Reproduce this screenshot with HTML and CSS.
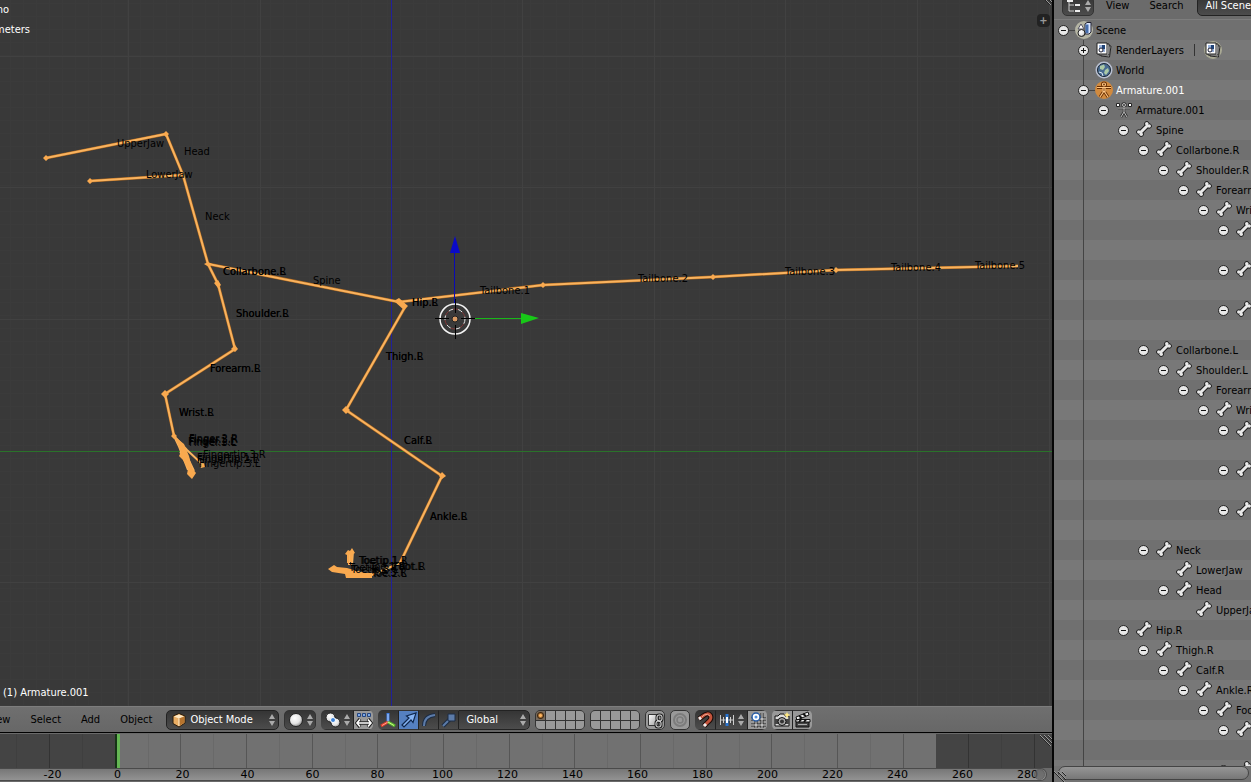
FILE: index.html
```html
<!DOCTYPE html>
<html lang="en">
<head>
    <meta charset="UTF-8">
    <meta name="viewport" content="width=device-width, initial-scale=1.0">
    <title>Armature.001</title>
    <link rel="stylesheet" href="styles.css">
</head>
<body>
    <!-- Shared icons -->
    <svg class="defs" width="0" height="0" aria-hidden="true">
        <defs>
            <linearGradient id="metal" x1="0" y1="0" x2="1" y2="1">
                <stop offset="0" stop-color="#fff"/>
                <stop offset="1" stop-color="#999"/>
            </linearGradient>
            <radialGradient id="ball" cx="0.4" cy="0.35" r="0.7">
                <stop offset="0" stop-color="#fff"/>
                <stop offset="0.6" stop-color="#e4e4e4"/>
                <stop offset="1" stop-color="#888"/>
            </radialGradient>
            <symbol id="bone" viewBox="0 0 18 18">
                <g fill="#1c1c1c" stroke="#1c1c1c">
                    <path d="M5 12 L13 4" stroke-width="5"/>
                    <circle cx="11.8" cy="2.8" r="2.2"/><circle cx="14.2" cy="5" r="2.2"/>
                    <circle cx="3.8" cy="11" r="2.2"/><circle cx="6.2" cy="13.2" r="2.2"/>
                </g>
                <g fill="#e8e8e8">
                    <path d="M5 12 L13 4" stroke="#e8e8e8" stroke-width="3"/>
                    <circle cx="11.8" cy="2.8" r="1.8"/><circle cx="14.2" cy="5" r="1.8"/>
                    <circle cx="3.8" cy="11" r="1.8"/><circle cx="6.2" cy="13.2" r="1.8"/>
                </g>
            </symbol>
            <symbol id="layers" viewBox="0 0 18 18">
                <path d="M5 4 L16 5 L14.5 16 L6 15 Z" fill="#ddd" stroke="#222"/>
                <path d="M4 3 H14 V14 H4 Z" fill="#eee" stroke="#222"/>
                <path d="M2 2 H12 V13 H2 Z" fill="#fff" stroke="#222"/>
                <path d="M4 4 H10 V11 H4 Z" fill="#9bb4dd"/>
                <path d="M7 4 H10 V8 H7 Z" fill="#1f4377"/>
                <circle cx="6" cy="9" r="2" fill="#fff" stroke="#223"/>
            </symbol>
            <symbol id="updown" viewBox="0 0 6 14">
                <path d="M3 1 L6 6 H0 Z M3 13 L6 8 H0 Z" fill="#aaa"/>
            </symbol>
            <symbol id="grip" viewBox="0 0 12 12">
                <path d="M0 1 L11 12 M4 1 L12 9 M8 1 L12 5" stroke="#999" fill="none"/>
                <path d="M0 2 L10 12 M4 2 L12 10 M8 2 L12 6" stroke="#222" fill="none"/>
            </symbol>
        </defs>
    </svg>

    <main class="editor">
        <section class="viewport" aria-label="3D View">
            <svg class="scene" width="100%" height="100%">
                <defs>
                    <pattern id="minor" x="10" y="3" width="13" height="13" patternUnits="userSpaceOnUse">
                        <path d="M0 0.5 H13 M0.5 0 V13" stroke="#3b3b3b"/>
                    </pattern>
                </defs>
                <rect width="100%" height="100%" fill="url(#minor)"/>
                <g stroke="#414141" shape-rendering="crispEdges">
                    <path d="M128.5 0 V2000 M260.5 0 V2000 M522.5 0 V2000 M654.5 0 V2000 M785.5 0 V2000 M917.5 0 V2000 M1049.5 0 V2000"/>
                    <path d="M0 56.5 H4000 M0 187.5 H4000 M0 319.5 H4000 M0 582.5 H4000"/>
                </g>
                <rect y="451" width="100%" height="1" fill="#2a722a"/>
                <rect x="391" width="1" height="100%" fill="#20209a"/>

                <!-- Bones -->
                <g class="bones-edge">
                    <path d="M46 158 L166 134 L183 175 L208 264 L399 302 L543 285 L712 277 L836 270 L1018 266"/>
                    <path d="M90 181 L183 175"/>
                    <path d="M208 264 L218 284 L235 349 L165 394 L174 436"/>
                    <path d="M399 302 L405 307 L346 410 L442 476 L400 563"/>
                </g>
                <g class="bones">
                    <path d="M46 158 L166 134 L183 175 L208 264 L399 302 L543 285 L712 277 L836 270 L1018 266"/>
                    <path d="M90 181 L183 175"/>
                    <path d="M208 264 L218 284 L235 349 L165 394 L174 436"/>
                    <path d="M399 302 L405 307 L346 410 L442 476 L400 563"/>
                    <path d="M174 436 L184 457 L192 475 M174 436 L187 450 L203 465 M178 444 L188 470 M182 446 L194 471 M180 452 L189 462"/>
                    <path d="M400 563 L372 575 L331 569 M346 575 L372 575 M334 570 L360 572 M349 565 L349 552 M352 565 L353 551"/>
                </g>
                <g class="joints">
                    <path d="M43 158 l3 -3 3 3 -3 3z M87 181 l3 -3 3 3 -3 3z M163 134 l3 -3 3 3 -3 3z M204 264 l4 -2 4 2 -3 3z M214 283 l4 -3 3 5 -3 3z M231 349 l4 -4 3 4 -3 3z M161 394 l4 -4 4 4 -4 4z M171 436 l3 -3 3 3 -3 3z"/>
                    <path d="M342 410 l4 -4 4 4 -4 4z M439 476 l3 -4 4 4 -4 3z M394 301 l5 -3 9 8 -4 4z M540 285 l3 -3 3 3 -3 3z M710 277 l3 -3 3 3 -3 3z M833 270 l3 -3 3 3 -3 3z"/>
                    <path d="M174 436 L184 444 L189 456 L192 468 L196 473 L192 479 L187 474 L188 469 L183 460 L179 456 L181 452 Z"/>
                    <path d="M328 569 L334 565 L337 567 L347 568 L364 573 L372 573 L372 578 L346 578 L345 574 L332 572 Z"/>
                    <path d="M345 554 l3 -4 2 1 2 -3 3 5 -2 1 -1 8 h-2 v-8 l-1 1 v8 h-2 v-8z"/>
                    <path d="M200 465 l4 -2 1 4 -4 1z"/>
                </g>

                <!-- Bone names, left and right sides lie over each other -->
                <g class="bone-names">
                    <text x="117" y="147">UpperJaw</text>
                    <text x="184" y="155">Head</text>
                    <text x="146" y="178">LowerJaw</text>
                    <text x="205" y="220">Neck</text>
                    <text x="313" y="284">Spine</text>
                    <text x="223" y="275">Collarbone.R</text><text x="223" y="275">Collarbone.L</text>
                    <text x="236" y="317">Shoulder.R</text><text x="236" y="317">Shoulder.L</text>
                    <text x="210" y="372">Forearm.R</text><text x="210" y="372">Forearm.L</text>
                    <text x="179" y="416">Wrist.R</text><text x="179" y="416">Wrist.L</text>
                    <text x="189" y="442">Finger.2.R</text><text x="189" y="443">Finger.3.R</text><text x="188" y="445">Finger.1.L</text><text x="189" y="446">Finger.3.L</text>
                    <text x="203" y="458">Fingertip.3.R</text><text x="197" y="461">Fingertip.1.R</text><text x="197" y="463">Fingertip.2.L</text><text x="199" y="467">Fingertip.3.L</text>
                    <text x="412" y="306">Hip.R</text><text x="412" y="306">Hip.L</text>
                    <text x="386" y="360">Thigh.R</text><text x="386" y="360">Thigh.L</text>
                    <text x="404" y="444">Calf.R</text><text x="404" y="444">Calf.L</text>
                    <text x="430" y="520">Ankle.R</text><text x="430" y="520">Ankle.L</text>
                    <text x="359" y="564">Toetip.1.R</text><text x="360" y="564">Toetip.1.L</text>
                    <text x="394" y="570">Foot.R</text><text x="393" y="570">Foot.L</text>
                    <text x="349" y="571">Toetip.2.R</text><text x="351" y="573">Toetip.3.L</text>
                    <text x="370" y="570">Toe.1.R</text><text x="371" y="576">Toe.3.R</text><text x="372" y="577">Toe.2.L</text>
                    <text x="480" y="294">Tailbone.1</text>
                    <text x="638" y="282">Tailbone.2</text>
                    <text x="785" y="275">Tailbone.3</text>
                    <text x="891" y="271">Tailbone.4</text>
                    <text x="975" y="269">Tailbone.5</text>
                </g>

                <!-- 3D cursor and manipulator -->
                <path d="M454.5 304 V252" stroke="#0a0ab4"/>
                <path d="M455 236 L460 253 H450 Z" fill="#0a0ac8"/>
                <path d="M475 318.5 H521" stroke="#18b818"/>
                <path d="M539 318 L521 313 V324 Z" fill="#18c818"/>
                <circle cx="455" cy="319" r="10" fill="none" stroke="#e6e6e6" stroke-dasharray="5 5"/>
                <circle cx="455" cy="319" r="10" fill="none" stroke="#803838" stroke-dasharray="5 5" stroke-dashoffset="5"/>
                <circle cx="455" cy="319" r="15" fill="none" stroke="#f4f4f4" stroke-width="1.5"/>
                <path d="M435 318.5 H449 M461 318.5 H475 M455.5 299 V313 M455.5 325 V339" stroke="#000"/>
                <circle cx="455" cy="319" r="3" fill="#d99a63" stroke="#222"/>

                <g class="view-info">
                    <text x="9" y="13" text-anchor="end">User Ortho</text>
                    <text x="30" y="33" text-anchor="end">Centimeters</text>
                    <text x="3" y="696">(1) Armature.001</text>
                </g>
            </svg>
            <button class="open-panel" type="button" aria-label="Show properties">+</button>
            <svg class="grip-view" width="12" height="12"><use href="#grip"/></svg>
        </section>

        <header class="toolbar">
            <button class="menu" type="button">View</button>
            <button class="menu" type="button">Select</button>
            <button class="menu" type="button">Add</button>
            <button class="menu" type="button">Object</button>

            <span class="dropdown mode">
                <svg class="lead" width="16" height="16" viewBox="0 0 16 16"><path d="M2 4 L8 1.5 L14 4 V11 L8 15 L2 11.5 Z" fill="#e9ad63" stroke="#2a1c0c"/><path d="M3 4.4 L8 2.4 L13 4.4 L8 6.4 Z" fill="#ffe9c4"/><path d="M8 6.4 L13.4 4.4 V10.6 L8 14.2 Z" fill="#b6742e"/><path d="M8 6.4 V14" stroke="#fff0d4"/></svg>
                <select aria-label="Mode"><option>Object Mode</option></select>
                <svg class="arrows" width="6" height="14"><use href="#updown"/></svg>
            </span>

            <button class="tool dark wide" type="button" aria-label="Viewport shading">
                <svg width="16" height="16" viewBox="0 0 16 16"><circle cx="8" cy="8" r="6.5" fill="url(#ball)" stroke="#222"/></svg>
                <svg width="6" height="14"><use href="#updown"/></svg>
            </button>

            <div class="group">
                <button class="tool dark wide" type="button" aria-label="Pivot point">
                    <svg width="16" height="16" viewBox="0 0 16 16"><circle cx="5.5" cy="5.5" r="4.5" fill="url(#ball)" stroke="#222"/><circle cx="10.5" cy="10.5" r="4.5" fill="url(#ball)" stroke="#222"/><circle cx="8" cy="8" r="2.5" fill="#3b82d8" stroke="#fff"/></svg>
                    <svg width="6" height="14"><use href="#updown"/></svg>
                </button>
                <button class="tool lit" type="button" aria-label="Manipulate center points">
                    <svg width="18" height="18" viewBox="0 0 18 18"><path d="M2.5 2.5h3v3h-3z M7.5 2.5h3v3h-3z M12.5 2.5h3v3h-3z" fill="#7eaae8" stroke="#25457e"/><path d="M5 8 L2 12 L5 16 M13 8 L16 12 L13 16 M2 12 H16" stroke="#222" stroke-width="3.4" fill="none"/><path d="M5 8.5 L2 12 L5 15.5 M13 8.5 L16 12 L13 15.5 M2 12 H16" stroke="#fff" stroke-width="1.6" fill="none"/></svg>
                </button>
            </div>

            <div class="group">
                <button class="tool dark" type="button" aria-label="Show manipulator">
                    <svg width="18" height="18" viewBox="0 0 18 18"><path d="M9 11 V2" stroke="#3d7be0" stroke-width="3"/><path d="M9 3 V10" stroke="#b9d3ff"/><path d="M9 11 L2 15" stroke="#de3c2c" stroke-width="3"/><path d="M9 11 L3 14.5" stroke="#ffa48c"/><path d="M9 11 L16 15" stroke="#58bc2c" stroke-width="3"/><path d="M9 11 L15 14.5" stroke="#d6f28c"/></svg>
                </button>
                <button class="tool active" type="button" aria-label="Translate">
                    <svg width="18" height="18" viewBox="0 0 18 18"><path d="M2 14 L9 7 L6.5 5 L16 2 L13 11.5 L11 9 L4 16 Z" fill="#86b4f4" stroke="#10284e" stroke-width="1.2"/></svg>
                </button>
                <button class="tool dark" type="button" aria-label="Rotate">
                    <svg width="18" height="18" viewBox="0 0 18 18"><path d="M4 15 Q4 5 15 4" stroke="#1c2c44" stroke-width="4" fill="none"/><path d="M4 15 Q4 5 15 4" stroke="#5c7ba8" stroke-width="2" fill="none"/></svg>
                </button>
                <button class="tool dark" type="button" aria-label="Scale">
                    <svg width="18" height="18" viewBox="0 0 18 18"><path d="M3 15 L10 8" stroke="#1c2c44" stroke-width="4"/><path d="M3 15 L10 8" stroke="#5c7ba8" stroke-width="2"/><path d="M8 3 H15 V10 H8 Z" fill="#5c7ba8" stroke="#1c2c44"/></svg>
                </button>
                <span class="dropdown orient">
                    <select aria-label="Transform orientation"><option>Global</option></select>
                    <svg class="arrows" width="6" height="14"><use href="#updown"/></svg>
                </span>
            </div>

            <button class="tool scene-layers" type="button" aria-label="Layers 1 to 10">
                <i class="used"></i><i></i><i></i><i></i><i></i><i></i><i></i><i></i><i></i><i></i>
            </button>
            <button class="tool scene-layers" type="button" aria-label="Layers 11 to 20">
                <i></i><i></i><i></i><i></i><i></i><i></i><i></i><i></i><i></i><i></i>
            </button>

            <button class="tool lit" type="button" aria-label="Lock to scene">
                <svg width="18" height="18" viewBox="0 0 18 18"><path d="M2.5 3.5 H12.5 V14.5 H2.5 Z" fill="url(#metal)" stroke="#333"/><rect x="11" y="4" width="5" height="6" rx="2" fill="none" stroke="#222" stroke-width="3"/><rect x="10" y="10" width="5" height="6" rx="2" fill="none" stroke="#222" stroke-width="3"/><rect x="11" y="4" width="5" height="6" rx="2" fill="none" stroke="#eee"/><rect x="10" y="10" width="5" height="6" rx="2" fill="none" stroke="#eee"/></svg>
            </button>
            <button class="tool lit" type="button" aria-label="Proportional editing">
                <svg width="18" height="18" viewBox="0 0 18 18" fill="none"><circle cx="9" cy="9" r="6" stroke="#7c7c7c" stroke-width="2"/><circle cx="9" cy="9" r="3" stroke="#7c7c7c" stroke-width="1.5"/></svg>
            </button>

            <div class="group">
                <button class="tool dark" type="button" aria-label="Snap">
                    <svg width="18" height="18" viewBox="0 0 18 18" fill="none"><path d="M3 8 L7 5 Q12 1 14.5 4.5 Q16 8 12 11 L8 15" stroke="#1c0c08" stroke-width="5"/><path d="M3 8 L7 5 Q12 1 14.5 4.5 Q16 8 12 11 L8 15" stroke="#c4543c" stroke-width="3"/><path d="M6 6 L8 4 Q12 2 14 5" stroke="#f0a28c"/><path d="M3 8 L5 6.5 M8 15 L10 13" stroke="#eee" stroke-width="3"/></svg>
                </button>
                <button class="tool dark wide" type="button" aria-label="Snap element">
                    <svg width="16" height="16" viewBox="0 0 16 16"><path d="M1 8 H15 M1.5 3 V13 M4.5 5 V11 M11.5 5 V11 M14.5 3 V13" stroke="#ccc"/><path d="M8 2 V14" stroke="#2874d0" stroke-width="3"/><path d="M8 5 V11" stroke="#fff" stroke-width="2"/></svg>
                    <svg width="6" height="14"><use href="#updown"/></svg>
                </button>
                <button class="tool lit" type="button" aria-label="Snap to grid">
                    <svg width="18" height="18" viewBox="0 0 18 18"><path d="M7 2 V17 M13 2 V17 M2 8 H17 M2 14 H17" stroke="#222" stroke-width="3"/><path d="M7 2 V17 M13 2 V17 M2 8 H17 M2 14 H17" stroke="#eee"/><circle cx="7" cy="6" r="4" fill="#fff" stroke="#285ca4" stroke-width="1.5"/><circle cx="7" cy="6" r="1.5" fill="#5090e0"/></svg>
                </button>
            </div>

            <div class="group">
                <button class="tool lit" type="button" aria-label="Render image">
                    <svg width="18" height="18" viewBox="0 0 18 18"><path d="M2 5 H5 L7 3 H11 L12 5 H16 V15 H2 Z" fill="#ddd" stroke="#111"/><path d="M2 8 H16 V13 H2 Z" fill="#444"/><circle cx="9" cy="10.5" r="4" fill="#aaa" stroke="#111"/><circle cx="9" cy="10.5" r="2" fill="#333"/><path d="M14 1 L15 3 L17.5 4 L15 5 L14 8 L13 5 L10.5 4 L13 3 Z" fill="#ffe984"/></svg>
                </button>
                <button class="tool lit" type="button" aria-label="Render animation">
                    <svg width="18" height="18" viewBox="0 0 18 18"><path d="M2 9 H15 V16 H2 Z" fill="#444" stroke="#111"/><path d="M2 6 L14 1 L15 4 L3 9 Z M2 8.5 H16 V11 H2 Z" fill="#eee" stroke="#111"/><path d="M5 5 L8 7 M9 3 L12 5 M5 11 L7 8.5 M10 11 L12 8.5" stroke="#111" stroke-width="2"/><path d="M4 13.5 H13" stroke="#aaa"/></svg>
                </button>
            </div>
        </header>

        <section class="timeline" aria-label="Timeline">
            <svg class="frames" width="100%" height="34">
                <rect x="117" width="819" height="34" fill="#717171"/>
                <g stroke="#000" stroke-opacity="0.07" shape-rendering="crispEdges">
                    <path d="M16.5 0 V34 M82.5 0 V34 M148.5 0 V34 M213.5 0 V34 M279.5 0 V34 M345.5 0 V34 M410.5 0 V34 M476.5 0 V34 M542.5 0 V34 M607.5 0 V34 M673.5 0 V34 M739.5 0 V34 M804.5 0 V34 M870.5 0 V34 M1001.5 0 V34"/>
                </g>
                <g stroke="#000" stroke-opacity="0.24" shape-rendering="crispEdges">
                    <path d="M49.5 0 V34 M180.5 0 V34 M246.5 0 V34 M312.5 0 V34 M377.5 0 V34 M443.5 0 V34 M509.5 0 V34 M574.5 0 V34 M640.5 0 V34 M706.5 0 V34 M771.5 0 V34 M837.5 0 V34 M903.5 0 V34 M968.5 0 V34 M1034.5 0 V34"/>
                </g>
                <rect x="115" width="2" height="34" fill="#163416"/>
                <rect x="117" width="3" height="34" fill="#65b854"/>
            </svg>
            <svg class="grip-top" width="12" height="12"><use href="#grip"/></svg>
            <div class="ruler">
                <span>-20</span><span>0</span><span>20</span><span>40</span><span>60</span><span>80</span><span>100</span><span>120</span><span>140</span><span>160</span><span>180</span><span>200</span><span>220</span><span>240</span><span>260</span><span>280</span>
                <b class="knob"></b>
            </div>
        </section>
    </main>

    <aside class="outliner">
        <header class="outliner-bar">
            <button class="tool dark editor-type" type="button" aria-label="Editor type">
                <svg width="16" height="16" viewBox="0 0 16 16"><path d="M3 2 V13 H8 M3 7 H8" fill="none" stroke="#ccc"/><path d="M1 3 H7 M9 7 H14 M9 13 H14" stroke="#eee" stroke-width="2"/></svg>
                <svg width="6" height="14"><use href="#updown"/></svg>
            </button>
            <button class="menu" type="button">View</button>
            <button class="menu" type="button">Search</button>
            <span class="dropdown display">
                <select aria-label="Display mode"><option>All Scenes</option></select>
            </span>
        </header>

        <ul class="tree">
            <li>
                <div class="row linked"><button class="toggle" type="button" aria-label="Collapse Scene"></button>
                    <svg width="18" height="18" viewBox="0 0 18 18"><circle cx="9" cy="9" r="9" fill="#b5b5a4"/><path d="M10 3 L12 1.5 H16 V11 L14 13 H10 Z" fill="#dce8ff" stroke="#223"/><path d="M10.5 3.5 H13.5 V12 H10.5 Z" fill="#466eac"/><path d="M3 8 L6 3 L9 8 Z" fill="#fff" stroke="#556"/><circle cx="6.5" cy="12" r="3.5" fill="url(#ball)" stroke="#222"/></svg>
                    <span>Scene</span></div>
                <ul class="trunk">
                    <li><div class="row"><button class="toggle closed" type="button" aria-label="Expand RenderLayers"></button><svg width="18" height="18"><use href="#layers"/></svg><span>RenderLayers</span><i class="bar"></i><svg class="extra" width="18" height="18" viewBox="0 0 18 18"><circle cx="9" cy="9" r="9" fill="#a9a994"/><use href="#layers"/></svg></div></li>
                    <li><div class="row leaf">
                        <svg width="18" height="18" viewBox="0 0 18 18"><circle cx="9" cy="9" r="8.5" fill="#b8bfd0"/><circle cx="9" cy="9" r="6.5" fill="#486b91" stroke="#172431"/><path d="M5 5 L9 3.5 L10 6 L8 9 L5 8 Z M10 9 L13 7 L14 10 L11 14 L9 12 Z" fill="#abc9a6"/><path d="M4 11 L7 12 L8 15" stroke="#dce8ee" fill="none"/></svg>
                        <span>World</span></div></li>
                    <li>
                        <div class="row linked selected"><button class="toggle" type="button" aria-label="Collapse Armature.001"></button>
                            <svg width="18" height="18" viewBox="0 0 18 18"><circle cx="9" cy="9" r="9" fill="#d18a3e"/><g fill="none" stroke="#6a3004" stroke-width="3"><circle cx="9" cy="3.5" r="1.5"/><path d="M2 6.5 H16 M9 6 V11 M9 10 L5 16 M9 10 L13 16"/></g><g fill="none" stroke="#ffc683" stroke-width="1.2"><circle cx="9" cy="3.5" r="1.5"/><path d="M2 6.5 H16 M8 6 V11 M10 6 V11 M9 10 L5 16 M9 10 L13 16"/></g></svg>
                            <span>Armature.001</span></div>
                        <ul>
                            <li>
                                <div class="row"><button class="toggle" type="button" aria-label="Collapse armature data"></button>
                                    <svg width="18" height="18" viewBox="0 0 18 18"><g fill="none" stroke="#333" stroke-width="2.5"><circle cx="9" cy="4" r="1.5"/><path d="M3 7 H15 M9 7 V11 M9 11 L6 16 M9 11 L12 16"/></g><g fill="none" stroke="#bbb"><circle cx="9" cy="4" r="1.5"/><path d="M3 7 H15 M9 7 V11 M9 11 L6 16 M9 11 L12 16"/></g><path d="M1.5 2.5h3v3h-3z M13.5 2.5h3v3h-3z" fill="#fff" stroke="#222"/></svg>
                                    <span>Armature.001</span></div>
                                <ul>
                                    <li>
                                        <div class="row"><button class="toggle" type="button" aria-label="Collapse Spine"></button><svg width="18" height="18"><use href="#bone"/></svg><span>Spine</span></div>
                                        <ul>
                                            <li>
                                                <div class="row"><button class="toggle" type="button" aria-label="Collapse Collarbone.R"></button><svg width="18" height="18"><use href="#bone"/></svg><span>Collarbone.R</span></div>
                                                <ul><li>
                                                    <div class="row"><button class="toggle" type="button" aria-label="Collapse Shoulder.R"></button><svg width="18" height="18"><use href="#bone"/></svg><span>Shoulder.R</span></div>
                                                    <ul><li>
                                                        <div class="row"><button class="toggle" type="button" aria-label="Collapse Forearm.R"></button><svg width="18" height="18"><use href="#bone"/></svg><span>Forearm.R</span></div>
                                                        <ul><li>
                                                            <div class="row"><button class="toggle" type="button" aria-label="Collapse Wrist.R"></button><svg width="18" height="18"><use href="#bone"/></svg><span>Wrist.R</span></div>
                                                            <ul>
                                                                <li class="finger"><div class="row"><button class="toggle" type="button" aria-label="Collapse Finger.1.R"></button><svg width="18" height="18"><use href="#bone"/></svg></div></li>
                                                                <li class="finger"><div class="row"><button class="toggle" type="button" aria-label="Collapse Finger.2.R"></button><svg width="18" height="18"><use href="#bone"/></svg></div></li>
                                                                <li class="finger"><div class="row"><button class="toggle" type="button" aria-label="Collapse Finger.3.R"></button><svg width="18" height="18"><use href="#bone"/></svg></div></li>
                                                            </ul>
                                                        </li></ul>
                                                    </li></ul>
                                                </li></ul>
                                            </li>
                                            <li>
                                                <div class="row"><button class="toggle" type="button" aria-label="Collapse Collarbone.L"></button><svg width="18" height="18"><use href="#bone"/></svg><span>Collarbone.L</span></div>
                                                <ul><li>
                                                    <div class="row"><button class="toggle" type="button" aria-label="Collapse Shoulder.L"></button><svg width="18" height="18"><use href="#bone"/></svg><span>Shoulder.L</span></div>
                                                    <ul><li>
                                                        <div class="row"><button class="toggle" type="button" aria-label="Collapse Forearm.L"></button><svg width="18" height="18"><use href="#bone"/></svg><span>Forearm.L</span></div>
                                                        <ul><li>
                                                            <div class="row"><button class="toggle" type="button" aria-label="Collapse Wrist.L"></button><svg width="18" height="18"><use href="#bone"/></svg><span>Wrist.L</span></div>
                                                            <ul>
                                                                <li class="finger"><div class="row"><button class="toggle" type="button" aria-label="Collapse Finger.1.L"></button><svg width="18" height="18"><use href="#bone"/></svg></div></li>
                                                                <li class="finger"><div class="row"><button class="toggle" type="button" aria-label="Collapse Finger.2.L"></button><svg width="18" height="18"><use href="#bone"/></svg></div></li>
                                                                <li class="finger"><div class="row"><button class="toggle" type="button" aria-label="Collapse Finger.3.L"></button><svg width="18" height="18"><use href="#bone"/></svg></div></li>
                                                            </ul>
                                                        </li></ul>
                                                    </li></ul>
                                                </li></ul>
                                            </li>
                                            <li>
                                                <div class="row"><button class="toggle" type="button" aria-label="Collapse Neck"></button><svg width="18" height="18"><use href="#bone"/></svg><span>Neck</span></div>
                                                <ul>
                                                    <li><div class="row leaf"><svg width="18" height="18"><use href="#bone"/></svg><span>LowerJaw</span></div></li>
                                                    <li>
                                                        <div class="row"><button class="toggle" type="button" aria-label="Collapse Head"></button><svg width="18" height="18"><use href="#bone"/></svg><span>Head</span></div>
                                                        <ul><li><div class="row leaf"><svg width="18" height="18"><use href="#bone"/></svg><span>UpperJaw</span></div></li></ul>
                                                    </li>
                                                </ul>
                                            </li>
                                        </ul>
                                    </li>
                                    <li>
                                        <div class="row"><button class="toggle" type="button" aria-label="Collapse Hip.R"></button><svg width="18" height="18"><use href="#bone"/></svg><span>Hip.R</span></div>
                                        <ul><li>
                                            <div class="row"><button class="toggle" type="button" aria-label="Collapse Thigh.R"></button><svg width="18" height="18"><use href="#bone"/></svg><span>Thigh.R</span></div>
                                            <ul><li>
                                                <div class="row"><button class="toggle" type="button" aria-label="Collapse Calf.R"></button><svg width="18" height="18"><use href="#bone"/></svg><span>Calf.R</span></div>
                                                <ul><li>
                                                    <div class="row"><button class="toggle" type="button" aria-label="Collapse Ankle.R"></button><svg width="18" height="18"><use href="#bone"/></svg><span>Ankle.R</span></div>
                                                    <ul><li>
                                                        <div class="row"><button class="toggle" type="button" aria-label="Collapse Foot.R"></button><svg width="18" height="18"><use href="#bone"/></svg><span>Foot.R</span></div>
                                                        <ul>
                                                            <li class="finger"><div class="row"><button class="toggle" type="button" aria-label="Collapse Toe.1.R"></button><svg width="18" height="18"><use href="#bone"/></svg></div></li>
                                                            <li class="finger"><div class="row"><button class="toggle" type="button" aria-label="Collapse Toe.2.R"></button><svg width="18" height="18"><use href="#bone"/></svg></div></li>
                                                        </ul>
                                                    </li></ul>
                                                </li></ul>
                                            </li></ul>
                                        </li></ul>
                                    </li>
                                </ul>
                            </li>
                        </ul>
                    </li>
                </ul>
            </li>
        </ul>

        <footer class="scroll-area">
            <div class="scrollbar"></div>
            <svg class="grip-bottom" width="12" height="12"><use href="#grip"/></svg>
        </footer>
    </aside>
</body>
</html>
```
FILE: styles.css
```css
* {
    box-sizing: border-box;
}

body {
    margin: 0;
    height: 100vh;
    overflow: hidden;
    display: grid;
    grid-template-columns: minmax(0, 1fr) 197px;
    gap: 2px;
    background: #050505;
    color: #000;
    font-family: "DejaVu Sans Condensed", "DejaVu Sans", sans-serif;
    font-size: 11px;
}

button,
select {
    font: inherit;
    color: inherit;
    margin: 0;
    padding: 0;
    border: none;
    background: none;
    appearance: none;
}

svg {
    display: block;
    flex-shrink: 0;
}

ul {
    list-style: none;
    margin: 0;
    padding: 0;
}

.defs {
    position: absolute;
}

.editor {
    display: grid;
    grid-template-rows: minmax(0, 1fr) 26px 50px;
    min-width: 0;
}

/* 3D view */
.viewport {
    position: relative;
    overflow: hidden;
    background: #393939;
}

.bones-edge,
.bones {
    fill: none;
    stroke: #b06a20;
    stroke-width: 3;
}

.bones {
    stroke: #f9b35f;
    stroke-width: 2;
}

.joints {
    fill: #f9a94f;
}

.bone-names {
    fill: #000;
}

.view-info {
    fill: #fff;
}

.open-panel {
    position: absolute;
    top: 14px;
    right: 2px;
    width: 13px;
    height: 13px;
    border-radius: 4px;
    background: #222;
    color: #999;
    font-weight: bold;
    line-height: 12px;
}

.grip-view {
    position: absolute;
    top: -7px;
    right: 0;
}

/* header bars */
.toolbar {
    display: flex;
    align-items: center;
    gap: 5px;
    margin-left: -13px;
    overflow: hidden;
    border-top: 1px solid #7d7d7d;
    background: linear-gradient(#6f6f6f, #676767);
}

.menu {
    flex-shrink: 0;
    margin-right: 15px;
}

.menu + .dropdown {
    margin-left: -6px;
}

.group {
    display: flex;
    flex-shrink: 0;
    border-radius: 5px;
    overflow: hidden;
}

.tool {
    display: flex;
    align-items: center;
    justify-content: center;
    gap: 3px;
    flex-shrink: 0;
    width: 20px;
    height: 20px;
    border: 1px solid #333;
    border-radius: 5px;
}

.group .tool {
    border-width: 1px 0;
    border-radius: 0;
}

.group .tool + .tool {
    border-left: 1px solid #222;
}

.tool.wide {
    width: 32px;
}

.dark {
    background: linear-gradient(#353535, #4c4c4c);
}

.lit {
    background: #999;
}

.active {
    background: #5580c1;
}

.dropdown {
    display: flex;
    align-items: center;
    flex-shrink: 0;
    position: relative;
    height: 20px;
    border: 1px solid #222;
    border-radius: 5px;
    background: linear-gradient(#353535, #4c4c4c);
    color: #fff;
}

.dropdown select {
    width: 100%;
    height: 18px;
    padding-left: 7px;
}

.lead,
.arrows {
    position: absolute;
    pointer-events: none;
}

.lead {
    left: 4px;
}

.arrows {
    right: 3px;
}

.mode {
    width: 113px;
}

.dropdown.mode select {
    padding-left: 23px;
}

.orient {
    width: 72px;
    border-radius: 0 5px 5px 0;
}

.scene-layers {
    display: grid;
    grid-template-columns: repeat(5, 1fr);
    gap: 1px;
    width: 50px;
    overflow: hidden;
    background: #333;
}

.scene-layers i {
    height: 9px;
    background: #999;
}

.scene-layers .used {
    background: radial-gradient(circle, #ffb45c 1px, #402810 3px, #776a5c 4px);
}

/* timeline */
.timeline {
    position: relative;
    overflow: hidden;
    padding-top: 1px;
    border-top: 1px solid #000;
    background: #6a6a6a;
}

.frames {
    background: #444;
}

.grip-top {
    position: absolute;
    top: 1px;
    right: 0;
}

.ruler {
    position: relative;
    display: flex;
    height: 13px;
    margin-right: 5px;
    padding-left: 20px;
    overflow: hidden;
    border: 1px solid #4a4a4a;
    border-left: none;
    border-radius: 0 7px 7px 0;
    background: linear-gradient(#777, #929292);
    font-family: "DejaVu Sans", sans-serif;
    line-height: 12px;
}

.ruler span {
    flex: 0 0 65px;
    text-align: center;
}

.knob {
    position: absolute;
    right: 1px;
    width: 11px;
    height: 11px;
    border: 1px solid #555;
    border-radius: 50%;
    background: #666;
    opacity: 0.7;
}

/* outliner */
.outliner {
    display: flex;
    flex-direction: column;
    min-width: 0;
    overflow: hidden;
    background: #707070;
}

.outliner-bar {
    display: flex;
    align-items: center;
    flex-shrink: 0;
    height: 28px;
    margin-top: -8px;
    padding-left: 8px;
    border-bottom: 1px solid #7d7d7d;
    background: #6b6b6b;
}

.outliner-bar .menu {
    margin: 0 0 0 20px;
}

.editor-type {
    width: 32px;
    margin-right: -8px;
}

.outliner-bar .display {
    width: 120px;
    margin-left: 14px;
}

.tree {
    flex: 1;
    min-height: 0;
    overflow: hidden;
    white-space: nowrap;
    background: repeating-linear-gradient(#707070 0 20px, #787878 20px 40px);
}

.trunk {
    padding-left: 20px;
    background: linear-gradient(#444, #444) 29px 0 / 1px 100% no-repeat;
}

.trunk ul {
    margin-left: 20px;
}

.row {
    display: flex;
    align-items: center;
    height: 20px;
    padding-left: 4px;
}

.row svg {
    margin: 0 3px 0 6px;
}

.leaf svg {
    margin-left: 17px;
}

.row.linked {
    background: linear-gradient(#444, #444) 10px 10px / 16px 1px no-repeat;
}

.selected {
    color: #fff;
}

/* a finger's tip lies past the edge of the panel */
.finger {
    padding-bottom: 20px;
}

.toggle {
    display: grid;
    place-items: center;
    grid-template-areas: "sign";
    flex-shrink: 0;
    width: 11px;
    height: 11px;
    border: 1px solid #222;
    border-radius: 50%;
    background: #e8e8e8;
}

.toggle::before,
.closed::after {
    content: "";
    grid-area: sign;
    width: 5px;
    height: 1px;
    background: #111;
}

.closed::after {
    width: 1px;
    height: 5px;
}

.bar {
    width: 1px;
    height: 12px;
    margin-left: 10px;
    background: #333;
}

.row .extra {
    margin-left: 9px;
}

.scroll-area {
    position: relative;
    flex-shrink: 0;
    height: 16px;
    padding: 0 2px 2px 4px;
    background: #727272;
}

.scrollbar {
    height: 14px;
    border: 1px solid #444;
    border-radius: 7px;
    background: linear-gradient(#959595, #777);
}

.grip-bottom {
    position: absolute;
    left: 0;
    bottom: 0;
}
```
